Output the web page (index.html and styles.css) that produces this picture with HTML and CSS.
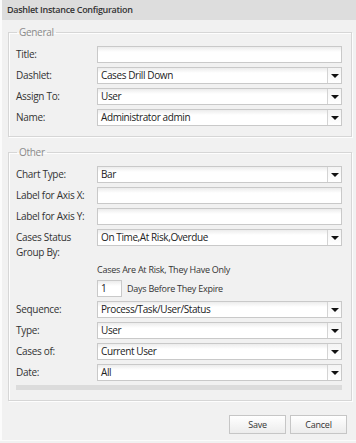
FILE: index.html
```html
<!DOCTYPE html>
<html lang="en">
<head>
    <meta charset="UTF-8">
    <title>Dashlet Instance Configuration</title>
    <link rel="stylesheet" href="styles.css">
</head>
<body>
    <div class="dialog">
        <div class="titlebar">Dashlet Instance Configuration</div>
        <div class="content">
            <fieldset class="group">
                <legend>General</legend>
                <div class="row"><label>Title:</label><div class="field"></div></div>
                <div class="row"><label>Dashlet:</label><div class="field select"><span>Cases Drill Down</span><i class="arrow"></i></div></div>
                <div class="row"><label>Assign To:</label><div class="field select"><span>User</span><i class="arrow"></i></div></div>
                <div class="row"><label>Name:</label><div class="field select"><span>Administrator admin</span><i class="arrow"></i></div></div>
            </fieldset>
            <fieldset class="group">
                <legend>Other</legend>
                <div class="row"><label>Chart Type:</label><div class="field select"><span>Bar</span><i class="arrow"></i></div></div>
                <div class="row"><label>Label for Axis X:</label><div class="field"></div></div>
                <div class="row"><label>Label for Axis Y:</label><div class="field"></div></div>
                <div class="row"><label class="wrap">Cases Status Group By:</label><div class="field select"><span>On Time,At Risk,Overdue</span><i class="arrow"></i></div></div>
                <div class="note">Cases Are At Risk, They Have Only</div>
                <div class="note days"><div class="field small">1</div><span>Days Before They Expire</span></div>
                <div class="row"><label>Sequence:</label><div class="field select"><span>Process/Task/User/Status</span><i class="arrow"></i></div></div>
                <div class="row"><label>Type:</label><div class="field select"><span>User</span><i class="arrow"></i></div></div>
                <div class="row"><label>Cases of:</label><div class="field select"><span>Current User</span><i class="arrow"></i></div></div>
                <div class="row"><label>Date:</label><div class="field select"><span>All</span><i class="arrow"></i></div></div>
                <div class="scrollbar"></div>
            </fieldset>
        </div>
        <div class="footer">
            <button>Save</button>
            <button>Cancel</button>
        </div>
    </div>
</body>
</html>
```

FILE: styles.css
```css
body {
    margin: 0;
    background: #f1f1f1;
    font-family: "Open Sans", Arial, sans-serif;
    font-size: 10px;
    letter-spacing: -0.3px;
    color: #333;
}
.dialog {
    width: 354px;
    height: 440px;
    border-left: 2px solid #fbfbfb;
    border-bottom: 1px solid #fbfbfb;
    background: #f1f1f1;
}
.titlebar {
    height: 20px;
    line-height: 20px;
    padding-left: 5px;
    background: #dddddd;
    font-size: 9px;
    font-weight: 600;
    letter-spacing: -0.3px;
    color: #333;
}
.content {
    padding: 6px 4px 0 6px;
}
.group {
    margin: 0 0 9px 0;
    padding: 2px 9px 10px 7px;
    border: 1px solid #d6d6d6;
    box-shadow: 1px 1px 0 #fdfdfd, inset 1px 1px 0 #fdfdfd;
}
.group legend {
    padding: 0 2px;
    margin-left: 1px;
    line-height: 12px;
    color: #8a8a8a;
}
.row {
    display: flex;
    align-items: flex-start;
    margin-top: 4px;
}
.group legend + .row {
    margin-top: 6px;
}
.row label {
    width: 81px;
    flex: none;
    line-height: 17px;
}
.row label.wrap {
    width: 70px;
    padding: 1px 11px 0 0;
    line-height: 15px;
}
.field {
    flex: 1;
    height: 15px;
    line-height: 15px;
    padding-left: 3px;
    border: 1px solid #c9c9c9;
    background: linear-gradient(#ececec, #ffffff 5px);
    color: #222;
    letter-spacing: -0.4px;
    display: flex;
}
.field span {
    flex: 1;
}
.select .arrow {
    width: 13px;
    flex: none;
    border-left: 1px solid #d4d4d4;
    background: linear-gradient(#f4f4f4, #ffffff);
    position: relative;
}
.select .arrow::after {
    content: "";
    position: absolute;
    left: 3px;
    top: 6px;
    border-left: 4px solid transparent;
    border-right: 4px solid transparent;
    border-top: 4px solid #111;
}
.note {
    margin: 4px 0 0 81px;
    line-height: 12px;
    font-size: 9px;
    letter-spacing: -0.25px;
}
.note.days {
    display: flex;
    align-items: center;
    margin-bottom: 1px;
}
.field.small {
    flex: none;
    width: 20px;
    margin-right: 5px;
    font-size: 10px;
}
.scrollbar {
    height: 5px;
    margin-top: 4px;
    background: #dcdcdc;
}
.footer {
    display: flex;
    justify-content: flex-end;
    gap: 4px;
    padding: 5px 9px 0 0;
}
.footer button {
    width: 57px;
    height: 19px;
    padding: 0;
    border: 1px solid #c6c6c6;
    background: linear-gradient(#ffffff, #ececec);
    font-family: "Open Sans", Arial, sans-serif;
    font-size: 9px;
    letter-spacing: -0.2px;
    color: #333;
}
```
